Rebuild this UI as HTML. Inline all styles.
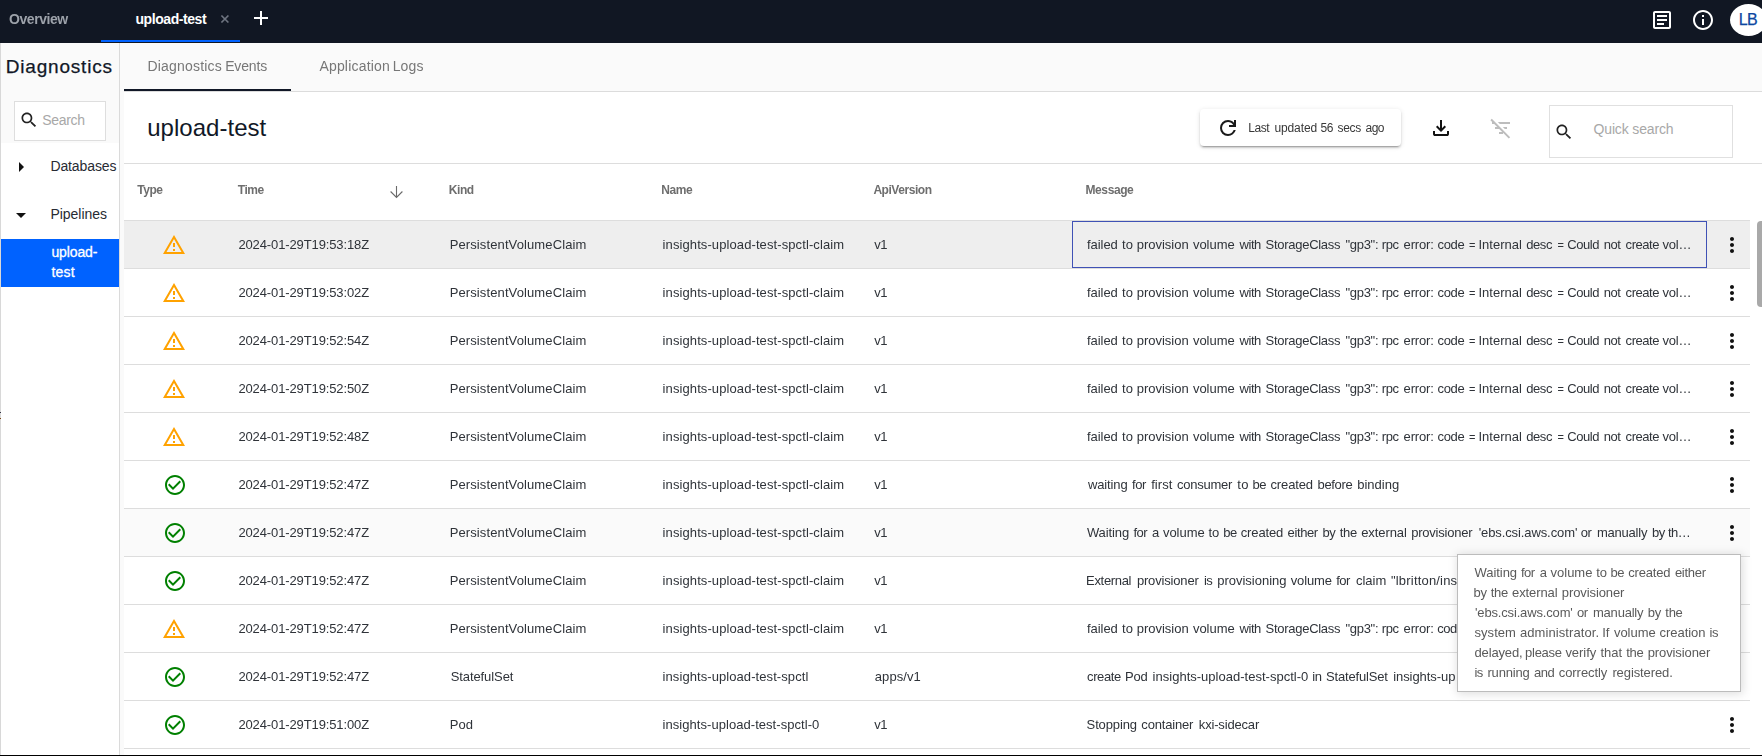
<!DOCTYPE html>
<html lang="en">
<head>
<meta charset="utf-8">
<title>Diagnostics - upload-test</title>
<style>
*{box-sizing:border-box;margin:0;padding:0}
html,body{width:1762px;height:756px;overflow:hidden;background:#fff;font-family:"Liberation Sans",sans-serif;}
body{position:relative}
.a{position:absolute}
.t{position:absolute;white-space:nowrap;display:block}
.gl{position:absolute;left:0;top:0;width:1762px;height:756px;will-change:transform;pointer-events:none}
svg{position:absolute;display:block;overflow:visible}
#topbar{left:0;top:0;width:1762px;height:43px;background:#111723}
#tabline{left:101px;top:40px;width:139px;height:2px;background:#0062ff}
#side{left:0;top:43px;width:120px;height:712px;background:#fff;border-right:1px solid #dadada;border-left:1px solid #d8d8d8}
#sidehead{left:1px;top:43px;width:118px;height:100px;background:#fafafa}
#sidesearch{left:14px;top:101px;width:92px;height:40px;background:#fff;border:1px solid #dedede}
#sel{left:1px;top:239px;width:118px;height:48px;background:#0062ff}
#gutter{left:120px;top:43px;width:4px;height:712px;background:#fafafa}
#tabbar{left:120px;top:43px;width:1642px;height:49px;background:#fafafa;border-bottom:1px solid #dcdcdc}
#tabul{left:124px;top:89px;width:167px;height:2px;background:#111827}
#hline{left:124px;top:163px;width:1638px;height:1px;background:#dddddd}
#hdrline{left:124px;top:220px;width:1626px;height:1px;background:#dddddd}
.row{left:124px;width:1626px;height:48px;border-bottom:1px solid #dddddd}
#r0{background:#eeeeee}
#r6{background:#fafafa}
#focus{left:1072px;top:221px;width:635px;height:47px;border:1px solid #3f51b5}
#btn{left:1200px;top:109px;width:201px;height:37px;background:#fff;border-radius:4px;box-shadow:0 3px 1px -2px rgba(0,0,0,.2),0 2px 2px 0 rgba(0,0,0,.14),0 1px 5px 0 rgba(0,0,0,.12)}
#qs{left:1549px;top:105px;width:184px;height:53px;background:#fff;border:1px solid #e0e0e0}
#tip{left:1457px;top:554px;width:284px;height:138px;background:#fff;border:1px solid #bcbcbc;box-shadow:1px 1px 9px 1px rgba(0,0,0,.13);z-index:10}
#thumb{left:1757px;top:221px;width:5px;height:86px;background:#a9a9a9;border-radius:4px 0 0 4px}
#bottom{left:0;top:755px;width:1762px;height:1px;background:#000}
</style>
</head>
<body>
<div class="a" id="topbar"></div>
<div class="a" id="tabline"></div>
<div class="a" id="side"></div>
<div class="a" id="sidehead"></div>
<div class="a" id="sidesearch"></div>
<div class="a" id="sel"></div>
<div class="a" id="tabbar"></div>
<div class="a" id="gutter"></div>
<div class="a" id="tabul"></div>
<div class="a" id="hline"></div>
<div class="a" id="hdrline"></div>
<div class="a row" id="r0" style="top:221px"></div>
<div class="a row" id="r1" style="top:269px"></div>
<div class="a row" id="r2" style="top:317px"></div>
<div class="a row" id="r3" style="top:365px"></div>
<div class="a row" id="r4" style="top:413px"></div>
<div class="a row" id="r5" style="top:461px"></div>
<div class="a row" id="r6" style="top:509px"></div>
<div class="a row" id="r7" style="top:557px"></div>
<div class="a row" id="r8" style="top:605px"></div>
<div class="a row" id="r9" style="top:653px"></div>
<div class="a row" id="r10" style="top:701px"></div>
<div class="a" id="focus"></div>
<div class="a" id="btn"></div>
<div class="a" id="qs"></div>
<div class="a" id="thumb"></div>
<svg style="left:1730px;top:4px;overflow:hidden" width="32" height="32" viewBox="0 0 32 32"><ellipse cx="18.5" cy="16" rx="18.5" ry="16" fill="#fff"/></svg>
<div class="a" id="tip"></div>
<svg style="left:162.4px;top:233px" width="24" height="24" viewBox="0 0 24 24"><path fill="#ffa200" d="M12 5.99L19.53 19H4.47L12 5.99M12 2L1 21h22L12 2zm1 14h-2v2h2v-2zm0-6h-2v4h2v-4z"/></svg>
<svg style="left:1720px;top:233px" width="24" height="24" viewBox="0 0 24 24"><path fill="#111" d="M12 8c1.1 0 2-.9 2-2s-.9-2-2-2-2 .9-2 2 .9 2 2 2zm0 2c-1.1 0-2 .9-2 2s.9 2 2 2 2-.9 2-2-.9-2-2-2zm0 6c-1.1 0-2 .9-2 2s.9 2 2 2 2-.9 2-2-.9-2-2-2z"/></svg>
<svg style="left:162.4px;top:281px" width="24" height="24" viewBox="0 0 24 24"><path fill="#ffa200" d="M12 5.99L19.53 19H4.47L12 5.99M12 2L1 21h22L12 2zm1 14h-2v2h2v-2zm0-6h-2v4h2v-4z"/></svg>
<svg style="left:1720px;top:281px" width="24" height="24" viewBox="0 0 24 24"><path fill="#111" d="M12 8c1.1 0 2-.9 2-2s-.9-2-2-2-2 .9-2 2 .9 2 2 2zm0 2c-1.1 0-2 .9-2 2s.9 2 2 2 2-.9 2-2-.9-2-2-2zm0 6c-1.1 0-2 .9-2 2s.9 2 2 2 2-.9 2-2-.9-2-2-2z"/></svg>
<svg style="left:162.4px;top:329px" width="24" height="24" viewBox="0 0 24 24"><path fill="#ffa200" d="M12 5.99L19.53 19H4.47L12 5.99M12 2L1 21h22L12 2zm1 14h-2v2h2v-2zm0-6h-2v4h2v-4z"/></svg>
<svg style="left:1720px;top:329px" width="24" height="24" viewBox="0 0 24 24"><path fill="#111" d="M12 8c1.1 0 2-.9 2-2s-.9-2-2-2-2 .9-2 2 .9 2 2 2zm0 2c-1.1 0-2 .9-2 2s.9 2 2 2 2-.9 2-2-.9-2-2-2zm0 6c-1.1 0-2 .9-2 2s.9 2 2 2 2-.9 2-2-.9-2-2-2z"/></svg>
<svg style="left:162.4px;top:377px" width="24" height="24" viewBox="0 0 24 24"><path fill="#ffa200" d="M12 5.99L19.53 19H4.47L12 5.99M12 2L1 21h22L12 2zm1 14h-2v2h2v-2zm0-6h-2v4h2v-4z"/></svg>
<svg style="left:1720px;top:377px" width="24" height="24" viewBox="0 0 24 24"><path fill="#111" d="M12 8c1.1 0 2-.9 2-2s-.9-2-2-2-2 .9-2 2 .9 2 2 2zm0 2c-1.1 0-2 .9-2 2s.9 2 2 2 2-.9 2-2-.9-2-2-2zm0 6c-1.1 0-2 .9-2 2s.9 2 2 2 2-.9 2-2-.9-2-2-2z"/></svg>
<svg style="left:162.4px;top:425px" width="24" height="24" viewBox="0 0 24 24"><path fill="#ffa200" d="M12 5.99L19.53 19H4.47L12 5.99M12 2L1 21h22L12 2zm1 14h-2v2h2v-2zm0-6h-2v4h2v-4z"/></svg>
<svg style="left:1720px;top:425px" width="24" height="24" viewBox="0 0 24 24"><path fill="#111" d="M12 8c1.1 0 2-.9 2-2s-.9-2-2-2-2 .9-2 2 .9 2 2 2zm0 2c-1.1 0-2 .9-2 2s.9 2 2 2 2-.9 2-2-.9-2-2-2zm0 6c-1.1 0-2 .9-2 2s.9 2 2 2 2-.9 2-2-.9-2-2-2z"/></svg>
<svg style="left:162.5px;top:473px" width="24" height="24" viewBox="0 0 24 24"><path fill="#008000" d="M16.59 7.58L10 14.17l-3.59-3.58L5 12l5 5 8-8zM12 2C6.48 2 2 6.48 2 12s4.48 10 10 10 10-4.48 10-10S17.52 2 12 2zm0 18c-4.42 0-8-3.58-8-8s3.58-8 8-8 8 3.58 8 8-3.58 8-8 8z"/></svg>
<svg style="left:1720px;top:473px" width="24" height="24" viewBox="0 0 24 24"><path fill="#111" d="M12 8c1.1 0 2-.9 2-2s-.9-2-2-2-2 .9-2 2 .9 2 2 2zm0 2c-1.1 0-2 .9-2 2s.9 2 2 2 2-.9 2-2-.9-2-2-2zm0 6c-1.1 0-2 .9-2 2s.9 2 2 2 2-.9 2-2-.9-2-2-2z"/></svg>
<svg style="left:162.5px;top:521px" width="24" height="24" viewBox="0 0 24 24"><path fill="#008000" d="M16.59 7.58L10 14.17l-3.59-3.58L5 12l5 5 8-8zM12 2C6.48 2 2 6.48 2 12s4.48 10 10 10 10-4.48 10-10S17.52 2 12 2zm0 18c-4.42 0-8-3.58-8-8s3.58-8 8-8 8 3.58 8 8-3.58 8-8 8z"/></svg>
<svg style="left:1720px;top:521px" width="24" height="24" viewBox="0 0 24 24"><path fill="#111" d="M12 8c1.1 0 2-.9 2-2s-.9-2-2-2-2 .9-2 2 .9 2 2 2zm0 2c-1.1 0-2 .9-2 2s.9 2 2 2 2-.9 2-2-.9-2-2-2zm0 6c-1.1 0-2 .9-2 2s.9 2 2 2 2-.9 2-2-.9-2-2-2z"/></svg>
<svg style="left:162.5px;top:569px" width="24" height="24" viewBox="0 0 24 24"><path fill="#008000" d="M16.59 7.58L10 14.17l-3.59-3.58L5 12l5 5 8-8zM12 2C6.48 2 2 6.48 2 12s4.48 10 10 10 10-4.48 10-10S17.52 2 12 2zm0 18c-4.42 0-8-3.58-8-8s3.58-8 8-8 8 3.58 8 8-3.58 8-8 8z"/></svg>
<svg style="left:1720px;top:569px" width="24" height="24" viewBox="0 0 24 24"><path fill="#111" d="M12 8c1.1 0 2-.9 2-2s-.9-2-2-2-2 .9-2 2 .9 2 2 2zm0 2c-1.1 0-2 .9-2 2s.9 2 2 2 2-.9 2-2-.9-2-2-2zm0 6c-1.1 0-2 .9-2 2s.9 2 2 2 2-.9 2-2-.9-2-2-2z"/></svg>
<svg style="left:162.4px;top:617px" width="24" height="24" viewBox="0 0 24 24"><path fill="#ffa200" d="M12 5.99L19.53 19H4.47L12 5.99M12 2L1 21h22L12 2zm1 14h-2v2h2v-2zm0-6h-2v4h2v-4z"/></svg>
<svg style="left:1720px;top:617px" width="24" height="24" viewBox="0 0 24 24"><path fill="#111" d="M12 8c1.1 0 2-.9 2-2s-.9-2-2-2-2 .9-2 2 .9 2 2 2zm0 2c-1.1 0-2 .9-2 2s.9 2 2 2 2-.9 2-2-.9-2-2-2zm0 6c-1.1 0-2 .9-2 2s.9 2 2 2 2-.9 2-2-.9-2-2-2z"/></svg>
<svg style="left:162.5px;top:665px" width="24" height="24" viewBox="0 0 24 24"><path fill="#008000" d="M16.59 7.58L10 14.17l-3.59-3.58L5 12l5 5 8-8zM12 2C6.48 2 2 6.48 2 12s4.48 10 10 10 10-4.48 10-10S17.52 2 12 2zm0 18c-4.42 0-8-3.58-8-8s3.58-8 8-8 8 3.58 8 8-3.58 8-8 8z"/></svg>
<svg style="left:1720px;top:665px" width="24" height="24" viewBox="0 0 24 24"><path fill="#111" d="M12 8c1.1 0 2-.9 2-2s-.9-2-2-2-2 .9-2 2 .9 2 2 2zm0 2c-1.1 0-2 .9-2 2s.9 2 2 2 2-.9 2-2-.9-2-2-2zm0 6c-1.1 0-2 .9-2 2s.9 2 2 2 2-.9 2-2-.9-2-2-2z"/></svg>
<svg style="left:162.5px;top:713px" width="24" height="24" viewBox="0 0 24 24"><path fill="#008000" d="M16.59 7.58L10 14.17l-3.59-3.58L5 12l5 5 8-8zM12 2C6.48 2 2 6.48 2 12s4.48 10 10 10 10-4.48 10-10S17.52 2 12 2zm0 18c-4.42 0-8-3.58-8-8s3.58-8 8-8 8 3.58 8 8-3.58 8-8 8z"/></svg>
<svg style="left:1720px;top:713px" width="24" height="24" viewBox="0 0 24 24"><path fill="#111" d="M12 8c1.1 0 2-.9 2-2s-.9-2-2-2-2 .9-2 2 .9 2 2 2zm0 2c-1.1 0-2 .9-2 2s.9 2 2 2 2-.9 2-2-.9-2-2-2zm0 6c-1.1 0-2 .9-2 2s.9 2 2 2 2-.9 2-2-.9-2-2-2z"/></svg>
<svg style="left:249px;top:6px" width="24" height="24" viewBox="0 0 24 24"><path fill="#fff" d="M19 13h-6v6h-2v-6H5v-2h6V5h2v6h6v2z"/></svg>
<svg style="left:220px;top:14px" width="10" height="10" viewBox="0 0 10 10"><path d="M1.4 1.5L8.4 8.5M8.4 1.5L1.4 8.5" stroke="#6e7480" stroke-width="1.7" fill="none"/></svg>
<svg style="left:1650px;top:8px" width="24" height="24" viewBox="0 0 24 24"><path fill="#fff" d="M19 5v14H5V5h14m0-2H5c-1.1 0-2 .9-2 2v14c0 1.1.9 2 2 2h14c1.1 0 2-.9 2-2V5c0-1.1-.9-2-2-2z M14 17H7v-2h7v2zm3-4H7v-2h10v2zm0-4H7V7h10v2z"/></svg>
<svg style="left:1691px;top:8px" width="24" height="24" viewBox="0 0 24 24"><path fill="#fff" d="M11 7h2v2h-2zm0 4h2v6h-2zm1-9C6.48 2 2 6.48 2 12s4.48 10 10 10 10-4.48 10-10S17.52 2 12 2zm0 18c-4.42 0-8-3.58-8-8s3.58-8 8-8 8 3.58 8 8-3.58 8-8 8z"/></svg>
<svg style="left:19.0px;top:110.2px" width="20" height="20" viewBox="0 0 24 24"><path fill="#222" d="M15.5 14h-.79l-.28-.27C15.41 12.59 16 11.11 16 9.5 16 5.91 13.09 3 9.5 3S3 5.91 3 9.5 5.91 16 9.5 16c1.61 0 3.09-.59 4.23-1.57l.27.28v.79l5 4.99L20.49 19l-4.99-5zm-6 0C7.01 14 5 11.99 5 9.5S7.01 5 9.5 5 14 7.01 14 9.5 11.99 14 9.5 14z"/></svg>
<svg style="left:19px;top:162px" width="5" height="10" viewBox="0 0 5 10"><path d="M0 0L5 5L0 10z" fill="#111"/></svg>
<svg style="left:16.1px;top:213px" width="10" height="5" viewBox="0 0 10 5"><path d="M0 0L10 0L5 5z" fill="#111"/></svg>
<svg style="left:1216.1px;top:115.9px" width="24" height="24" viewBox="0 0 24 24"><path fill="#1a1a1a" d="M12 20q-3.35 0-5.675-2.325Q4 15.35 4 12q0-3.35 2.325-5.675Q8.65 4 12 4q1.725 0 3.3.712Q16.875 5.425 18 6.75V4h2v7h-7V9h4.2q-.8-1.4-2.187-2.2Q13.625 6 12 6 9.5 6 7.75 7.75T6 12q0 2.5 1.75 4.25T12 18q1.925 0 3.475-1.1T17.65 14h2.1q-.7 2.650-2.85 4.325Q14.75 20 12 20z"/></svg>
<svg style="left:1428.9px;top:115.9px" width="24" height="24" viewBox="0 0 24 24"><path fill="#111" d="M12 16l-5-5 1.4-1.45 2.6 2.6V4h2v8.15l2.6-2.6L17 11zm-6 4q-.825 0-1.412-.587Q4 18.825 4 18v-3h2v3h12v-3h2v3q0 .825-.587 1.413Q18.825 20 18 20z"/></svg>
<svg style="left:1489.3px;top:116.3px" width="24" height="24" viewBox="0 0 24 24"><path fill="#bdbdbd" d="M10.83 8H21V6H8.83l2 2zm5 5H18v-2h-4.17l2 2zM14 16.83V18h-4v-2h3.17l-3-3H6v-2h2.17l-3-3H3V6h.17L1.39 4.22 2.8 2.81l18.38 18.38-1.41 1.41L14 16.83z"/></svg>
<svg style="left:1553.8px;top:122.0px" width="20" height="20" viewBox="0 0 24 24"><path fill="#222" d="M15.5 14h-.79l-.28-.27C15.41 12.59 16 11.11 16 9.5 16 5.91 13.09 3 9.5 3S3 5.91 3 9.5 5.91 16 9.5 16c1.61 0 3.09-.59 4.23-1.57l.27.28v.79l5 4.99L20.49 19l-4.99-5zm-6 0C7.01 14 5 11.99 5 9.5S7.01 5 9.5 5 14 7.01 14 9.5 11.99 14 9.5 14z"/></svg>
<svg style="left:389px;top:185px" width="16" height="14" viewBox="0 0 16 14"><path d="M7.5 1V12.3M1.6 6.5L7.5 12.4L13.4 6.5" stroke="#6a6a6a" stroke-width="1.1" fill="none"/></svg>
<div class="a" style="left:0;top:412px;width:1px;height:1px;background:#334"></div><div class="a" style="left:0;top:418px;width:1px;height:1px;background:#741"></div>
<span class="t" style="left:135.50px;top:8.65px;font-size:14px;line-height:21px;letter-spacing:-0.438px;color:#ffffff;font-weight:700;">upload-test</span>
<span class="t" style="left:1738.80px;top:8.46px;font-size:16px;line-height:24px;letter-spacing:-0.598px;color:#0d47a1;-webkit-text-stroke:0.25px #0d47a1;">LB</span>
<span class="t" style="left:5.80px;top:53.42px;font-size:19px;line-height:28px;letter-spacing:0.799px;color:#111827;-webkit-text-stroke:0.25px #111827;">Diagnostics</span>
<span class="t" style="left:42.30px;top:109.65px;font-size:14px;line-height:21px;letter-spacing:-0.314px;color:#a8a8a8;">Search</span>
<span class="t" style="left:50.40px;top:155.65px;font-size:14px;line-height:21px;letter-spacing:-0.104px;color:#272b33;">Databases</span>
<span class="t" style="left:50.40px;top:203.65px;font-size:14px;line-height:21px;letter-spacing:-0.027px;color:#272b33;">Pipelines</span>
<span class="t" style="left:51.40px;top:241.65px;font-size:14px;line-height:21px;letter-spacing:-0.107px;color:#fff;-webkit-text-stroke:0.3px #fff;">upload-</span>
<span class="t" style="left:51.40px;top:261.65px;font-size:14px;line-height:21px;letter-spacing:0.208px;color:#fff;-webkit-text-stroke:0.3px #fff;">test</span>
<span class="t" style="left:147.20px;top:110.18px;font-size:24px;line-height:36px;letter-spacing:0.032px;color:#111827;">upload-test</span>
<span class="t" style="left:1593.50px;top:118.65px;font-size:14px;line-height:21px;letter-spacing:-0.146px;color:#a8a8a8;">Quick search</span>
<div class="gl" style="z-index:5">
<span class="t" style="left:9.04px;top:8.65px;font-size:14px;line-height:21px;letter-spacing:-0.450px;color:#9da2aa;font-weight:700;">Overview</span>
<span class="t" style="left:147.50px;top:55.65px;font-size:14px;line-height:21px;letter-spacing:0.183px;color:#777;">Diagnostics</span>
<span class="t" style="left:225.20px;top:55.65px;font-size:14px;line-height:21px;letter-spacing:-0.160px;color:#777;">Events</span>
<span class="t" style="left:319.40px;top:55.65px;font-size:14px;line-height:21px;letter-spacing:0.190px;color:#777;">Application</span>
<span class="t" style="left:392.70px;top:55.65px;font-size:14px;line-height:21px;letter-spacing:0.147px;color:#777;">Logs</span>
<span class="t" style="left:1248.25px;top:118.84px;font-size:12px;line-height:18px;letter-spacing:-0.450px;color:#383838;">Last</span>
<span class="t" style="left:1274.40px;top:118.84px;font-size:12px;line-height:18px;letter-spacing:-0.101px;color:#383838;">updated</span>
<span class="t" style="left:1320.59px;top:118.84px;font-size:12px;line-height:18px;letter-spacing:-0.450px;color:#383838;">56</span>
<span class="t" style="left:1337.60px;top:118.84px;font-size:12px;line-height:18px;letter-spacing:-0.358px;color:#383838;">secs</span>
<span class="t" style="left:1365.43px;top:118.84px;font-size:12px;line-height:18px;letter-spacing:-0.450px;color:#383838;">ago</span>
<span class="t" style="left:137.20px;top:180.84px;font-size:12px;line-height:18px;letter-spacing:-0.450px;color:#6e6e6e;font-weight:700;">Type</span>
<span class="t" style="left:237.72px;top:180.84px;font-size:12px;line-height:18px;letter-spacing:-0.450px;color:#6e6e6e;font-weight:700;">Time</span>
<span class="t" style="left:448.81px;top:180.84px;font-size:12px;line-height:18px;letter-spacing:-0.450px;color:#6e6e6e;font-weight:700;">Kind</span>
<span class="t" style="left:661.37px;top:180.84px;font-size:12px;line-height:18px;letter-spacing:-0.450px;color:#6e6e6e;font-weight:700;">Name</span>
<span class="t" style="left:873.40px;top:180.84px;font-size:12px;line-height:18px;letter-spacing:-0.450px;color:#6e6e6e;font-weight:700;">ApiVersion</span>
<span class="t" style="left:1085.50px;top:180.84px;font-size:12px;line-height:18px;letter-spacing:-0.404px;color:#6e6e6e;font-weight:700;">Message</span>
<span class="t" style="left:238.40px;top:234.80px;font-size:13px;line-height:20px;letter-spacing:-0.118px;color:#2f3339;">2024-01-29T19:53:18Z</span>
<span class="t" style="left:449.70px;top:234.80px;font-size:13px;line-height:20px;letter-spacing:0.112px;color:#2f3339;">PersistentVolumeClaim</span>
<span class="t" style="left:662.60px;top:234.80px;font-size:13px;line-height:20px;letter-spacing:0.096px;color:#2f3339;">insights-upload-test-spctl-claim</span>
<span class="t" style="left:874.32px;top:234.80px;font-size:13px;line-height:20px;letter-spacing:-0.450px;color:#2f3339;">v1</span>
<span class="t" style="left:1086.90px;top:234.80px;font-size:13px;line-height:20px;letter-spacing:-0.030px;color:#2f3339;">failed</span>
<span class="t" style="left:1122.10px;top:234.80px;font-size:13px;line-height:20px;letter-spacing:-0.012px;color:#2f3339;">to</span>
<span class="t" style="left:1136.80px;top:234.80px;font-size:13px;line-height:20px;letter-spacing:-0.024px;color:#2f3339;">provision</span>
<span class="t" style="left:1193.00px;top:234.80px;font-size:13px;line-height:20px;letter-spacing:-0.055px;color:#2f3339;">volume</span>
<span class="t" style="left:1239.40px;top:234.80px;font-size:13px;line-height:20px;letter-spacing:-0.396px;color:#2f3339;">with</span>
<span class="t" style="left:1265.60px;top:234.80px;font-size:13px;line-height:20px;letter-spacing:-0.285px;color:#2f3339;">StorageClass</span>
<span class="t" style="left:1345.50px;top:234.80px;font-size:13px;line-height:20px;letter-spacing:-0.304px;color:#2f3339;">&quot;gp3&quot;:</span>
<span class="t" style="left:1381.87px;top:234.80px;font-size:13px;line-height:20px;letter-spacing:-0.450px;color:#2f3339;">rpc</span>
<span class="t" style="left:1403.60px;top:234.80px;font-size:13px;line-height:20px;letter-spacing:-0.169px;color:#2f3339;">error:</span>
<span class="t" style="left:1437.60px;top:234.80px;font-size:13px;line-height:20px;letter-spacing:-0.353px;color:#2f3339;">code</span>
<span class="t" style="left:1468.90px;top:236.99px;font-size:11px;line-height:16px;letter-spacing:0.000px;color:#2f3339;">=</span>
<span class="t" style="left:1478.50px;top:234.80px;font-size:13px;line-height:20px;letter-spacing:0.004px;color:#2f3339;">Internal</span>
<span class="t" style="left:1526.30px;top:234.80px;font-size:13px;line-height:20px;letter-spacing:-0.450px;color:#2f3339;">desc</span>
<span class="t" style="left:1557.40px;top:236.99px;font-size:11px;line-height:16px;letter-spacing:0.000px;color:#2f3339;">=</span>
<span class="t" style="left:1567.28px;top:234.80px;font-size:13px;line-height:20px;letter-spacing:-0.450px;color:#2f3339;">Could</span>
<span class="t" style="left:1603.77px;top:234.80px;font-size:13px;line-height:20px;letter-spacing:-0.450px;color:#2f3339;">not</span>
<span class="t" style="left:1625.62px;top:234.80px;font-size:13px;line-height:20px;letter-spacing:-0.450px;color:#2f3339;">create</span>
<span class="t" style="left:1662.40px;top:234.80px;font-size:13px;line-height:20px;letter-spacing:-0.206px;color:#2f3339;">vol…</span>
<span class="t" style="left:238.40px;top:282.80px;font-size:13px;line-height:20px;letter-spacing:-0.118px;color:#2f3339;">2024-01-29T19:53:02Z</span>
<span class="t" style="left:449.70px;top:282.80px;font-size:13px;line-height:20px;letter-spacing:0.112px;color:#2f3339;">PersistentVolumeClaim</span>
<span class="t" style="left:662.60px;top:282.80px;font-size:13px;line-height:20px;letter-spacing:0.096px;color:#2f3339;">insights-upload-test-spctl-claim</span>
<span class="t" style="left:874.32px;top:282.80px;font-size:13px;line-height:20px;letter-spacing:-0.450px;color:#2f3339;">v1</span>
<span class="t" style="left:1086.90px;top:282.80px;font-size:13px;line-height:20px;letter-spacing:-0.030px;color:#2f3339;">failed</span>
<span class="t" style="left:1122.10px;top:282.80px;font-size:13px;line-height:20px;letter-spacing:-0.012px;color:#2f3339;">to</span>
<span class="t" style="left:1136.80px;top:282.80px;font-size:13px;line-height:20px;letter-spacing:-0.024px;color:#2f3339;">provision</span>
<span class="t" style="left:1193.00px;top:282.80px;font-size:13px;line-height:20px;letter-spacing:-0.055px;color:#2f3339;">volume</span>
<span class="t" style="left:1239.40px;top:282.80px;font-size:13px;line-height:20px;letter-spacing:-0.396px;color:#2f3339;">with</span>
<span class="t" style="left:1265.60px;top:282.80px;font-size:13px;line-height:20px;letter-spacing:-0.285px;color:#2f3339;">StorageClass</span>
<span class="t" style="left:1345.50px;top:282.80px;font-size:13px;line-height:20px;letter-spacing:-0.304px;color:#2f3339;">&quot;gp3&quot;:</span>
<span class="t" style="left:1381.87px;top:282.80px;font-size:13px;line-height:20px;letter-spacing:-0.450px;color:#2f3339;">rpc</span>
<span class="t" style="left:1403.60px;top:282.80px;font-size:13px;line-height:20px;letter-spacing:-0.169px;color:#2f3339;">error:</span>
<span class="t" style="left:1437.60px;top:282.80px;font-size:13px;line-height:20px;letter-spacing:-0.353px;color:#2f3339;">code</span>
<span class="t" style="left:1468.90px;top:284.99px;font-size:11px;line-height:16px;letter-spacing:0.000px;color:#2f3339;">=</span>
<span class="t" style="left:1478.50px;top:282.80px;font-size:13px;line-height:20px;letter-spacing:0.004px;color:#2f3339;">Internal</span>
<span class="t" style="left:1526.30px;top:282.80px;font-size:13px;line-height:20px;letter-spacing:-0.450px;color:#2f3339;">desc</span>
<span class="t" style="left:1557.40px;top:284.99px;font-size:11px;line-height:16px;letter-spacing:0.000px;color:#2f3339;">=</span>
<span class="t" style="left:1567.28px;top:282.80px;font-size:13px;line-height:20px;letter-spacing:-0.450px;color:#2f3339;">Could</span>
<span class="t" style="left:1603.77px;top:282.80px;font-size:13px;line-height:20px;letter-spacing:-0.450px;color:#2f3339;">not</span>
<span class="t" style="left:1625.62px;top:282.80px;font-size:13px;line-height:20px;letter-spacing:-0.450px;color:#2f3339;">create</span>
<span class="t" style="left:1662.40px;top:282.80px;font-size:13px;line-height:20px;letter-spacing:-0.206px;color:#2f3339;">vol…</span>
<span class="t" style="left:238.40px;top:330.80px;font-size:13px;line-height:20px;letter-spacing:-0.118px;color:#2f3339;">2024-01-29T19:52:54Z</span>
<span class="t" style="left:449.70px;top:330.80px;font-size:13px;line-height:20px;letter-spacing:0.112px;color:#2f3339;">PersistentVolumeClaim</span>
<span class="t" style="left:662.60px;top:330.80px;font-size:13px;line-height:20px;letter-spacing:0.096px;color:#2f3339;">insights-upload-test-spctl-claim</span>
<span class="t" style="left:874.32px;top:330.80px;font-size:13px;line-height:20px;letter-spacing:-0.450px;color:#2f3339;">v1</span>
<span class="t" style="left:1086.90px;top:330.80px;font-size:13px;line-height:20px;letter-spacing:-0.030px;color:#2f3339;">failed</span>
<span class="t" style="left:1122.10px;top:330.80px;font-size:13px;line-height:20px;letter-spacing:-0.012px;color:#2f3339;">to</span>
<span class="t" style="left:1136.80px;top:330.80px;font-size:13px;line-height:20px;letter-spacing:-0.024px;color:#2f3339;">provision</span>
<span class="t" style="left:1193.00px;top:330.80px;font-size:13px;line-height:20px;letter-spacing:-0.055px;color:#2f3339;">volume</span>
<span class="t" style="left:1239.40px;top:330.80px;font-size:13px;line-height:20px;letter-spacing:-0.396px;color:#2f3339;">with</span>
<span class="t" style="left:1265.60px;top:330.80px;font-size:13px;line-height:20px;letter-spacing:-0.285px;color:#2f3339;">StorageClass</span>
<span class="t" style="left:1345.50px;top:330.80px;font-size:13px;line-height:20px;letter-spacing:-0.304px;color:#2f3339;">&quot;gp3&quot;:</span>
<span class="t" style="left:1381.87px;top:330.80px;font-size:13px;line-height:20px;letter-spacing:-0.450px;color:#2f3339;">rpc</span>
<span class="t" style="left:1403.60px;top:330.80px;font-size:13px;line-height:20px;letter-spacing:-0.169px;color:#2f3339;">error:</span>
<span class="t" style="left:1437.60px;top:330.80px;font-size:13px;line-height:20px;letter-spacing:-0.353px;color:#2f3339;">code</span>
<span class="t" style="left:1468.90px;top:332.99px;font-size:11px;line-height:16px;letter-spacing:0.000px;color:#2f3339;">=</span>
<span class="t" style="left:1478.50px;top:330.80px;font-size:13px;line-height:20px;letter-spacing:0.004px;color:#2f3339;">Internal</span>
<span class="t" style="left:1526.30px;top:330.80px;font-size:13px;line-height:20px;letter-spacing:-0.450px;color:#2f3339;">desc</span>
<span class="t" style="left:1557.40px;top:332.99px;font-size:11px;line-height:16px;letter-spacing:0.000px;color:#2f3339;">=</span>
<span class="t" style="left:1567.28px;top:330.80px;font-size:13px;line-height:20px;letter-spacing:-0.450px;color:#2f3339;">Could</span>
<span class="t" style="left:1603.77px;top:330.80px;font-size:13px;line-height:20px;letter-spacing:-0.450px;color:#2f3339;">not</span>
<span class="t" style="left:1625.62px;top:330.80px;font-size:13px;line-height:20px;letter-spacing:-0.450px;color:#2f3339;">create</span>
<span class="t" style="left:1662.40px;top:330.80px;font-size:13px;line-height:20px;letter-spacing:-0.206px;color:#2f3339;">vol…</span>
<span class="t" style="left:238.40px;top:378.80px;font-size:13px;line-height:20px;letter-spacing:-0.118px;color:#2f3339;">2024-01-29T19:52:50Z</span>
<span class="t" style="left:449.70px;top:378.80px;font-size:13px;line-height:20px;letter-spacing:0.112px;color:#2f3339;">PersistentVolumeClaim</span>
<span class="t" style="left:662.60px;top:378.80px;font-size:13px;line-height:20px;letter-spacing:0.096px;color:#2f3339;">insights-upload-test-spctl-claim</span>
<span class="t" style="left:874.32px;top:378.80px;font-size:13px;line-height:20px;letter-spacing:-0.450px;color:#2f3339;">v1</span>
<span class="t" style="left:1086.90px;top:378.80px;font-size:13px;line-height:20px;letter-spacing:-0.030px;color:#2f3339;">failed</span>
<span class="t" style="left:1122.10px;top:378.80px;font-size:13px;line-height:20px;letter-spacing:-0.012px;color:#2f3339;">to</span>
<span class="t" style="left:1136.80px;top:378.80px;font-size:13px;line-height:20px;letter-spacing:-0.024px;color:#2f3339;">provision</span>
<span class="t" style="left:1193.00px;top:378.80px;font-size:13px;line-height:20px;letter-spacing:-0.055px;color:#2f3339;">volume</span>
<span class="t" style="left:1239.40px;top:378.80px;font-size:13px;line-height:20px;letter-spacing:-0.396px;color:#2f3339;">with</span>
<span class="t" style="left:1265.60px;top:378.80px;font-size:13px;line-height:20px;letter-spacing:-0.285px;color:#2f3339;">StorageClass</span>
<span class="t" style="left:1345.50px;top:378.80px;font-size:13px;line-height:20px;letter-spacing:-0.304px;color:#2f3339;">&quot;gp3&quot;:</span>
<span class="t" style="left:1381.87px;top:378.80px;font-size:13px;line-height:20px;letter-spacing:-0.450px;color:#2f3339;">rpc</span>
<span class="t" style="left:1403.60px;top:378.80px;font-size:13px;line-height:20px;letter-spacing:-0.169px;color:#2f3339;">error:</span>
<span class="t" style="left:1437.60px;top:378.80px;font-size:13px;line-height:20px;letter-spacing:-0.353px;color:#2f3339;">code</span>
<span class="t" style="left:1468.90px;top:380.99px;font-size:11px;line-height:16px;letter-spacing:0.000px;color:#2f3339;">=</span>
<span class="t" style="left:1478.50px;top:378.80px;font-size:13px;line-height:20px;letter-spacing:0.004px;color:#2f3339;">Internal</span>
<span class="t" style="left:1526.30px;top:378.80px;font-size:13px;line-height:20px;letter-spacing:-0.450px;color:#2f3339;">desc</span>
<span class="t" style="left:1557.40px;top:380.99px;font-size:11px;line-height:16px;letter-spacing:0.000px;color:#2f3339;">=</span>
<span class="t" style="left:1567.28px;top:378.80px;font-size:13px;line-height:20px;letter-spacing:-0.450px;color:#2f3339;">Could</span>
<span class="t" style="left:1603.77px;top:378.80px;font-size:13px;line-height:20px;letter-spacing:-0.450px;color:#2f3339;">not</span>
<span class="t" style="left:1625.62px;top:378.80px;font-size:13px;line-height:20px;letter-spacing:-0.450px;color:#2f3339;">create</span>
<span class="t" style="left:1662.40px;top:378.80px;font-size:13px;line-height:20px;letter-spacing:-0.206px;color:#2f3339;">vol…</span>
<span class="t" style="left:238.40px;top:426.80px;font-size:13px;line-height:20px;letter-spacing:-0.118px;color:#2f3339;">2024-01-29T19:52:48Z</span>
<span class="t" style="left:449.70px;top:426.80px;font-size:13px;line-height:20px;letter-spacing:0.112px;color:#2f3339;">PersistentVolumeClaim</span>
<span class="t" style="left:662.60px;top:426.80px;font-size:13px;line-height:20px;letter-spacing:0.096px;color:#2f3339;">insights-upload-test-spctl-claim</span>
<span class="t" style="left:874.32px;top:426.80px;font-size:13px;line-height:20px;letter-spacing:-0.450px;color:#2f3339;">v1</span>
<span class="t" style="left:1086.90px;top:426.80px;font-size:13px;line-height:20px;letter-spacing:-0.030px;color:#2f3339;">failed</span>
<span class="t" style="left:1122.10px;top:426.80px;font-size:13px;line-height:20px;letter-spacing:-0.012px;color:#2f3339;">to</span>
<span class="t" style="left:1136.80px;top:426.80px;font-size:13px;line-height:20px;letter-spacing:-0.024px;color:#2f3339;">provision</span>
<span class="t" style="left:1193.00px;top:426.80px;font-size:13px;line-height:20px;letter-spacing:-0.055px;color:#2f3339;">volume</span>
<span class="t" style="left:1239.40px;top:426.80px;font-size:13px;line-height:20px;letter-spacing:-0.396px;color:#2f3339;">with</span>
<span class="t" style="left:1265.60px;top:426.80px;font-size:13px;line-height:20px;letter-spacing:-0.285px;color:#2f3339;">StorageClass</span>
<span class="t" style="left:1345.50px;top:426.80px;font-size:13px;line-height:20px;letter-spacing:-0.304px;color:#2f3339;">&quot;gp3&quot;:</span>
<span class="t" style="left:1381.87px;top:426.80px;font-size:13px;line-height:20px;letter-spacing:-0.450px;color:#2f3339;">rpc</span>
<span class="t" style="left:1403.60px;top:426.80px;font-size:13px;line-height:20px;letter-spacing:-0.169px;color:#2f3339;">error:</span>
<span class="t" style="left:1437.60px;top:426.80px;font-size:13px;line-height:20px;letter-spacing:-0.353px;color:#2f3339;">code</span>
<span class="t" style="left:1468.90px;top:428.99px;font-size:11px;line-height:16px;letter-spacing:0.000px;color:#2f3339;">=</span>
<span class="t" style="left:1478.50px;top:426.80px;font-size:13px;line-height:20px;letter-spacing:0.004px;color:#2f3339;">Internal</span>
<span class="t" style="left:1526.30px;top:426.80px;font-size:13px;line-height:20px;letter-spacing:-0.450px;color:#2f3339;">desc</span>
<span class="t" style="left:1557.40px;top:428.99px;font-size:11px;line-height:16px;letter-spacing:0.000px;color:#2f3339;">=</span>
<span class="t" style="left:1567.28px;top:426.80px;font-size:13px;line-height:20px;letter-spacing:-0.450px;color:#2f3339;">Could</span>
<span class="t" style="left:1603.77px;top:426.80px;font-size:13px;line-height:20px;letter-spacing:-0.450px;color:#2f3339;">not</span>
<span class="t" style="left:1625.62px;top:426.80px;font-size:13px;line-height:20px;letter-spacing:-0.450px;color:#2f3339;">create</span>
<span class="t" style="left:1662.40px;top:426.80px;font-size:13px;line-height:20px;letter-spacing:-0.206px;color:#2f3339;">vol…</span>
<span class="t" style="left:238.40px;top:474.80px;font-size:13px;line-height:20px;letter-spacing:-0.118px;color:#2f3339;">2024-01-29T19:52:47Z</span>
<span class="t" style="left:449.70px;top:474.80px;font-size:13px;line-height:20px;letter-spacing:0.112px;color:#2f3339;">PersistentVolumeClaim</span>
<span class="t" style="left:662.60px;top:474.80px;font-size:13px;line-height:20px;letter-spacing:0.096px;color:#2f3339;">insights-upload-test-spctl-claim</span>
<span class="t" style="left:874.32px;top:474.80px;font-size:13px;line-height:20px;letter-spacing:-0.450px;color:#2f3339;">v1</span>
<span class="t" style="left:1087.90px;top:474.80px;font-size:13px;line-height:20px;letter-spacing:-0.123px;color:#2f3339;">waiting</span>
<span class="t" style="left:1132.03px;top:474.80px;font-size:13px;line-height:20px;letter-spacing:-0.450px;color:#2f3339;">for</span>
<span class="t" style="left:1151.20px;top:474.80px;font-size:13px;line-height:20px;letter-spacing:0.043px;color:#2f3339;">first</span>
<span class="t" style="left:1177.00px;top:474.80px;font-size:13px;line-height:20px;letter-spacing:-0.250px;color:#2f3339;">consumer</span>
<span class="t" style="left:1237.30px;top:474.80px;font-size:13px;line-height:20px;letter-spacing:0.288px;color:#2f3339;">to</span>
<span class="t" style="left:1252.46px;top:474.80px;font-size:13px;line-height:20px;letter-spacing:-0.450px;color:#2f3339;">be</span>
<span class="t" style="left:1270.50px;top:474.80px;font-size:13px;line-height:20px;letter-spacing:-0.138px;color:#2f3339;">created</span>
<span class="t" style="left:1317.50px;top:474.80px;font-size:13px;line-height:20px;letter-spacing:-0.326px;color:#2f3339;">before</span>
<span class="t" style="left:1357.20px;top:474.80px;font-size:13px;line-height:20px;letter-spacing:0.017px;color:#2f3339;">binding</span>
<span class="t" style="left:238.40px;top:522.80px;font-size:13px;line-height:20px;letter-spacing:-0.118px;color:#2f3339;">2024-01-29T19:52:47Z</span>
<span class="t" style="left:449.70px;top:522.80px;font-size:13px;line-height:20px;letter-spacing:0.112px;color:#2f3339;">PersistentVolumeClaim</span>
<span class="t" style="left:662.60px;top:522.80px;font-size:13px;line-height:20px;letter-spacing:0.096px;color:#2f3339;">insights-upload-test-spctl-claim</span>
<span class="t" style="left:874.32px;top:522.80px;font-size:13px;line-height:20px;letter-spacing:-0.450px;color:#2f3339;">v1</span>
<span class="t" style="left:1086.90px;top:522.80px;font-size:13px;line-height:20px;letter-spacing:-0.089px;color:#2f3339;">Waiting</span>
<span class="t" style="left:1133.38px;top:522.80px;font-size:13px;line-height:20px;letter-spacing:-0.450px;color:#2f3339;">for</span>
<span class="t" style="left:1152.00px;top:522.80px;font-size:13px;line-height:20px;letter-spacing:0.000px;color:#2f3339;">a</span>
<span class="t" style="left:1163.00px;top:522.80px;font-size:13px;line-height:20px;letter-spacing:-0.055px;color:#2f3339;">volume</span>
<span class="t" style="left:1208.40px;top:522.80px;font-size:13px;line-height:20px;letter-spacing:-0.112px;color:#2f3339;">to</span>
<span class="t" style="left:1223.16px;top:522.80px;font-size:13px;line-height:20px;letter-spacing:-0.450px;color:#2f3339;">be</span>
<span class="t" style="left:1240.70px;top:522.80px;font-size:13px;line-height:20px;letter-spacing:-0.122px;color:#2f3339;">created</span>
<span class="t" style="left:1287.60px;top:522.80px;font-size:13px;line-height:20px;letter-spacing:-0.398px;color:#2f3339;">either</span>
<span class="t" style="left:1322.41px;top:522.80px;font-size:13px;line-height:20px;letter-spacing:-0.450px;color:#2f3339;">by</span>
<span class="t" style="left:1339.70px;top:522.80px;font-size:13px;line-height:20px;letter-spacing:-0.271px;color:#2f3339;">the</span>
<span class="t" style="left:1361.20px;top:522.80px;font-size:13px;line-height:20px;letter-spacing:-0.080px;color:#2f3339;">external</span>
<span class="t" style="left:1411.20px;top:522.80px;font-size:13px;line-height:20px;letter-spacing:-0.226px;color:#2f3339;">provisioner</span>
<span class="t" style="left:1478.70px;top:522.80px;font-size:13px;line-height:20px;letter-spacing:-0.103px;color:#2f3339;">'ebs.csi.aws.com'</span>
<span class="t" style="left:1580.81px;top:522.80px;font-size:13px;line-height:20px;letter-spacing:-0.450px;color:#2f3339;">or</span>
<span class="t" style="left:1596.90px;top:522.80px;font-size:13px;line-height:20px;letter-spacing:-0.204px;color:#2f3339;">manually</span>
<span class="t" style="left:1652.06px;top:522.80px;font-size:13px;line-height:20px;letter-spacing:-0.450px;color:#2f3339;">by</span>
<span class="t" style="left:1667.88px;top:522.80px;font-size:13px;line-height:20px;letter-spacing:-0.450px;color:#2f3339;">th…</span>
<span class="t" style="left:238.40px;top:570.80px;font-size:13px;line-height:20px;letter-spacing:-0.118px;color:#2f3339;">2024-01-29T19:52:47Z</span>
<span class="t" style="left:449.70px;top:570.80px;font-size:13px;line-height:20px;letter-spacing:0.112px;color:#2f3339;">PersistentVolumeClaim</span>
<span class="t" style="left:662.60px;top:570.80px;font-size:13px;line-height:20px;letter-spacing:0.096px;color:#2f3339;">insights-upload-test-spctl-claim</span>
<span class="t" style="left:874.32px;top:570.80px;font-size:13px;line-height:20px;letter-spacing:-0.450px;color:#2f3339;">v1</span>
<span class="t" style="left:1086.10px;top:570.80px;font-size:13px;line-height:20px;letter-spacing:-0.329px;color:#2f3339;">External</span>
<span class="t" style="left:1136.90px;top:570.80px;font-size:13px;line-height:20px;letter-spacing:-0.166px;color:#2f3339;">provisioner</span>
<span class="t" style="left:1203.88px;top:570.80px;font-size:13px;line-height:20px;letter-spacing:-0.450px;color:#2f3339;">is</span>
<span class="t" style="left:1217.20px;top:570.80px;font-size:13px;line-height:20px;letter-spacing:-0.004px;color:#2f3339;">provisioning</span>
<span class="t" style="left:1290.70px;top:570.80px;font-size:13px;line-height:20px;letter-spacing:-0.135px;color:#2f3339;">volume</span>
<span class="t" style="left:1336.13px;top:570.80px;font-size:13px;line-height:20px;letter-spacing:-0.450px;color:#2f3339;">for</span>
<span class="t" style="left:1356.00px;top:570.80px;font-size:13px;line-height:20px;letter-spacing:-0.027px;color:#2f3339;">claim</span>
<span class="t" style="left:1391.00px;top:570.80px;font-size:13px;line-height:20px;letter-spacing:0.186px;color:#2f3339;">&quot;lbritton/ins</span>
<span class="t" style="left:238.40px;top:618.80px;font-size:13px;line-height:20px;letter-spacing:-0.118px;color:#2f3339;">2024-01-29T19:52:47Z</span>
<span class="t" style="left:449.70px;top:618.80px;font-size:13px;line-height:20px;letter-spacing:0.112px;color:#2f3339;">PersistentVolumeClaim</span>
<span class="t" style="left:662.60px;top:618.80px;font-size:13px;line-height:20px;letter-spacing:0.096px;color:#2f3339;">insights-upload-test-spctl-claim</span>
<span class="t" style="left:874.32px;top:618.80px;font-size:13px;line-height:20px;letter-spacing:-0.450px;color:#2f3339;">v1</span>
<span class="t" style="left:1086.90px;top:618.80px;font-size:13px;line-height:20px;letter-spacing:-0.030px;color:#2f3339;">failed</span>
<span class="t" style="left:1122.10px;top:618.80px;font-size:13px;line-height:20px;letter-spacing:-0.012px;color:#2f3339;">to</span>
<span class="t" style="left:1136.80px;top:618.80px;font-size:13px;line-height:20px;letter-spacing:-0.024px;color:#2f3339;">provision</span>
<span class="t" style="left:1193.00px;top:618.80px;font-size:13px;line-height:20px;letter-spacing:-0.055px;color:#2f3339;">volume</span>
<span class="t" style="left:1239.40px;top:618.80px;font-size:13px;line-height:20px;letter-spacing:-0.396px;color:#2f3339;">with</span>
<span class="t" style="left:1265.60px;top:618.80px;font-size:13px;line-height:20px;letter-spacing:-0.285px;color:#2f3339;">StorageClass</span>
<span class="t" style="left:1345.50px;top:618.80px;font-size:13px;line-height:20px;letter-spacing:-0.304px;color:#2f3339;">&quot;gp3&quot;:</span>
<span class="t" style="left:1381.87px;top:618.80px;font-size:13px;line-height:20px;letter-spacing:-0.450px;color:#2f3339;">rpc</span>
<span class="t" style="left:1403.60px;top:618.80px;font-size:13px;line-height:20px;letter-spacing:-0.169px;color:#2f3339;">error:</span>
<span class="t" style="left:1437.19px;top:618.80px;font-size:13px;line-height:20px;letter-spacing:-0.450px;color:#2f3339;">cod</span>
<span class="t" style="left:238.40px;top:666.80px;font-size:13px;line-height:20px;letter-spacing:-0.118px;color:#2f3339;">2024-01-29T19:52:47Z</span>
<span class="t" style="left:450.70px;top:666.80px;font-size:13px;line-height:20px;letter-spacing:-0.089px;color:#2f3339;">StatefulSet</span>
<span class="t" style="left:662.60px;top:666.80px;font-size:13px;line-height:20px;letter-spacing:0.076px;color:#2f3339;">insights-upload-test-spctl</span>
<span class="t" style="left:874.80px;top:666.80px;font-size:13px;line-height:20px;letter-spacing:0.083px;color:#2f3339;">apps/v1</span>
<span class="t" style="left:1087.10px;top:666.80px;font-size:13px;line-height:20px;letter-spacing:-0.420px;color:#2f3339;">create</span>
<span class="t" style="left:1125.00px;top:666.80px;font-size:13px;line-height:20px;letter-spacing:-0.200px;color:#2f3339;">Pod</span>
<span class="t" style="left:1152.60px;top:666.80px;font-size:13px;line-height:20px;letter-spacing:0.011px;color:#2f3339;">insights-upload-test-spctl-0</span>
<span class="t" style="left:1312.33px;top:666.80px;font-size:13px;line-height:20px;letter-spacing:-0.450px;color:#2f3339;">in</span>
<span class="t" style="left:1326.10px;top:666.80px;font-size:13px;line-height:20px;letter-spacing:-0.179px;color:#2f3339;">StatefulSet</span>
<span class="t" style="left:1393.20px;top:666.80px;font-size:13px;line-height:20px;letter-spacing:-0.064px;color:#2f3339;">insights-up</span>
<span class="t" style="left:238.40px;top:714.80px;font-size:13px;line-height:20px;letter-spacing:-0.118px;color:#2f3339;">2024-01-29T19:51:00Z</span>
<span class="t" style="left:449.70px;top:714.80px;font-size:13px;line-height:20px;letter-spacing:0.100px;color:#2f3339;">Pod</span>
<span class="t" style="left:662.60px;top:714.80px;font-size:13px;line-height:20px;letter-spacing:0.048px;color:#2f3339;">insights-upload-test-spctl-0</span>
<span class="t" style="left:874.32px;top:714.80px;font-size:13px;line-height:20px;letter-spacing:-0.450px;color:#2f3339;">v1</span>
<span class="t" style="left:1086.60px;top:714.80px;font-size:13px;line-height:20px;letter-spacing:-0.127px;color:#2f3339;">Stopping</span>
<span class="t" style="left:1141.30px;top:714.80px;font-size:13px;line-height:20px;letter-spacing:-0.169px;color:#2f3339;">container</span>
<span class="t" style="left:1198.80px;top:714.80px;font-size:13px;line-height:20px;letter-spacing:-0.170px;color:#2f3339;">kxi-sidecar</span>
</div>
<div class="gl" style="z-index:20">
<span class="t" style="left:1474.50px;top:562.50px;font-size:13px;line-height:20px;letter-spacing:-0.056px;color:#5a5a5a;z-index:20;">Waiting</span>
<span class="t" style="left:1520.88px;top:562.50px;font-size:13px;line-height:20px;letter-spacing:-0.450px;color:#5a5a5a;z-index:20;">for</span>
<span class="t" style="left:1539.70px;top:562.50px;font-size:13px;line-height:20px;letter-spacing:0.000px;color:#5a5a5a;z-index:20;">a</span>
<span class="t" style="left:1550.50px;top:562.50px;font-size:13px;line-height:20px;letter-spacing:0.005px;color:#5a5a5a;z-index:20;">volume</span>
<span class="t" style="left:1596.30px;top:562.50px;font-size:13px;line-height:20px;letter-spacing:-0.212px;color:#5a5a5a;z-index:20;">to</span>
<span class="t" style="left:1610.56px;top:562.50px;font-size:13px;line-height:20px;letter-spacing:-0.450px;color:#5a5a5a;z-index:20;">be</span>
<span class="t" style="left:1628.20px;top:562.50px;font-size:13px;line-height:20px;letter-spacing:-0.172px;color:#5a5a5a;z-index:20;">created</span>
<span class="t" style="left:1674.90px;top:562.50px;font-size:13px;line-height:20px;letter-spacing:-0.258px;color:#5a5a5a;z-index:20;">either</span>
<span class="t" style="left:1473.61px;top:582.50px;font-size:13px;line-height:20px;letter-spacing:-0.450px;color:#5a5a5a;z-index:20;">by</span>
<span class="t" style="left:1490.70px;top:582.50px;font-size:13px;line-height:20px;letter-spacing:-0.321px;color:#5a5a5a;z-index:20;">the</span>
<span class="t" style="left:1512.00px;top:582.50px;font-size:13px;line-height:20px;letter-spacing:-0.094px;color:#5a5a5a;z-index:20;">external</span>
<span class="t" style="left:1561.80px;top:582.50px;font-size:13px;line-height:20px;letter-spacing:-0.096px;color:#5a5a5a;z-index:20;">provisioner</span>
<span class="t" style="left:1475.00px;top:602.50px;font-size:13px;line-height:20px;letter-spacing:-0.159px;color:#5a5a5a;z-index:20;">'ebs.csi.aws.com'</span>
<span class="t" style="left:1576.96px;top:602.50px;font-size:13px;line-height:20px;letter-spacing:-0.450px;color:#5a5a5a;z-index:20;">or</span>
<span class="t" style="left:1593.00px;top:602.50px;font-size:13px;line-height:20px;letter-spacing:-0.218px;color:#5a5a5a;z-index:20;">manually</span>
<span class="t" style="left:1647.86px;top:602.50px;font-size:13px;line-height:20px;letter-spacing:-0.450px;color:#5a5a5a;z-index:20;">by</span>
<span class="t" style="left:1665.30px;top:602.50px;font-size:13px;line-height:20px;letter-spacing:-0.271px;color:#5a5a5a;z-index:20;">the</span>
<span class="t" style="left:1474.50px;top:622.50px;font-size:13px;line-height:20px;letter-spacing:0.052px;color:#5a5a5a;z-index:20;">system</span>
<span class="t" style="left:1519.90px;top:622.50px;font-size:13px;line-height:20px;letter-spacing:0.098px;color:#5a5a5a;z-index:20;">administrator.</span>
<span class="t" style="left:1602.20px;top:622.50px;font-size:13px;line-height:20px;letter-spacing:-0.012px;color:#5a5a5a;z-index:20;">If</span>
<span class="t" style="left:1613.90px;top:622.50px;font-size:13px;line-height:20px;letter-spacing:-0.015px;color:#5a5a5a;z-index:20;">volume</span>
<span class="t" style="left:1659.60px;top:622.50px;font-size:13px;line-height:20px;letter-spacing:-0.046px;color:#5a5a5a;z-index:20;">creation</span>
<span class="t" style="left:1709.58px;top:622.50px;font-size:13px;line-height:20px;letter-spacing:-0.450px;color:#5a5a5a;z-index:20;">is</span>
<span class="t" style="left:1474.50px;top:642.50px;font-size:13px;line-height:20px;letter-spacing:-0.148px;color:#5a5a5a;z-index:20;">delayed,</span>
<span class="t" style="left:1525.10px;top:642.50px;font-size:13px;line-height:20px;letter-spacing:-0.276px;color:#5a5a5a;z-index:20;">please</span>
<span class="t" style="left:1565.40px;top:642.50px;font-size:13px;line-height:20px;letter-spacing:-0.032px;color:#5a5a5a;z-index:20;">verify</span>
<span class="t" style="left:1600.60px;top:642.50px;font-size:13px;line-height:20px;letter-spacing:-0.091px;color:#5a5a5a;z-index:20;">that</span>
<span class="t" style="left:1626.20px;top:642.50px;font-size:13px;line-height:20px;letter-spacing:-0.271px;color:#5a5a5a;z-index:20;">the</span>
<span class="t" style="left:1647.70px;top:642.50px;font-size:13px;line-height:20px;letter-spacing:-0.106px;color:#5a5a5a;z-index:20;">provisioner</span>
<span class="t" style="left:1474.38px;top:662.50px;font-size:13px;line-height:20px;letter-spacing:-0.450px;color:#5a5a5a;z-index:20;">is</span>
<span class="t" style="left:1487.50px;top:662.50px;font-size:13px;line-height:20px;letter-spacing:-0.206px;color:#5a5a5a;z-index:20;">running</span>
<span class="t" style="left:1534.02px;top:662.50px;font-size:13px;line-height:20px;letter-spacing:-0.450px;color:#5a5a5a;z-index:20;">and</span>
<span class="t" style="left:1558.80px;top:662.50px;font-size:13px;line-height:20px;letter-spacing:-0.077px;color:#5a5a5a;z-index:20;">correctly</span>
<span class="t" style="left:1612.40px;top:662.50px;font-size:13px;line-height:20px;letter-spacing:-0.101px;color:#5a5a5a;z-index:20;">registered.</span>
</div>
<div class="a" id="bottom"></div>
</body>
</html>
